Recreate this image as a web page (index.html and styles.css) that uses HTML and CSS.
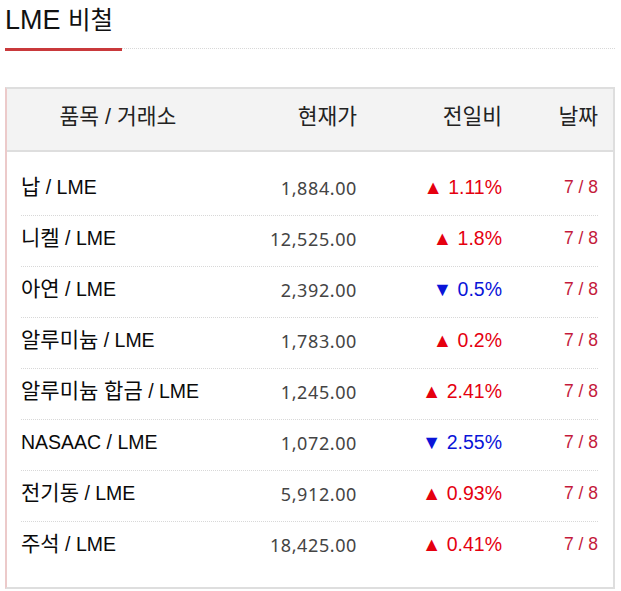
FILE: index.html
```html
<!DOCTYPE html>
<html lang="ko">
<head>
<meta charset="utf-8">
<title>LME 비철</title>
<link rel="stylesheet" href="styles.css">
</head>
<body>
<div class="title-bar">
  <h2 class="title"><span class="t-en">LME</span> <span class="t-ko">비철</span></h2>
  <div class="rule"></div>
</div>
<div class="box">
  <div class="head">
    <div class="h-name">품목 / 거래소</div>
    <div class="h-num">현재가</div>
    <div class="h-num">전일비</div>
    <div class="h-num">날짜</div>
  </div>
  <div class="body">
    <div class="row"><div class="name"><span class="ko">납</span> / LME</div><div class="price">1,884.00</div><div class="chg up">▲ 1.11%</div><div class="date">7 / 8</div></div>
    <div class="row"><div class="name"><span class="ko">니켈</span> / LME</div><div class="price">12,525.00</div><div class="chg up">▲ 1.8%</div><div class="date">7 / 8</div></div>
    <div class="row"><div class="name"><span class="ko">아연</span> / LME</div><div class="price">2,392.00</div><div class="chg down">▼ 0.5%</div><div class="date">7 / 8</div></div>
    <div class="row"><div class="name"><span class="ko">알루미늄</span> / LME</div><div class="price">1,783.00</div><div class="chg up">▲ 0.2%</div><div class="date">7 / 8</div></div>
    <div class="row"><div class="name"><span class="ko">알루미늄 합금</span> / LME</div><div class="price">1,245.00</div><div class="chg up">▲ 2.41%</div><div class="date">7 / 8</div></div>
    <div class="row"><div class="name">NASAAC / LME</div><div class="price">1,072.00</div><div class="chg down">▼ 2.55%</div><div class="date">7 / 8</div></div>
    <div class="row"><div class="name"><span class="ko">전기동</span> / LME</div><div class="price">5,912.00</div><div class="chg up">▲ 0.93%</div><div class="date">7 / 8</div></div>
    <div class="row"><div class="name"><span class="ko">주석</span> / LME</div><div class="price">18,425.00</div><div class="chg up">▲ 0.41%</div><div class="date">7 / 8</div></div>
  </div>
</div>
</body>
</html>
```

FILE: styles.css
```css
* { box-sizing: border-box; }
html, body { margin: 0; padding: 0; background: #fff; }
body {
  width: 621px;
  padding: 0 6px 0 5px;
  font-family: "Liberation Sans", "Noto Sans CJK KR", sans-serif;
  color: #111;
}
.title-bar {
  display: flex;
  align-items: flex-end;
  height: 51px;
}
.title {
  margin: 0;
  width: 117px;
  height: 51px;
  padding-top: 2px;
  font-size: 27px;
  line-height: 36px;
  font-weight: normal;
  color: #111;
  border-bottom: 3px solid #c9393b;
  white-space: nowrap;
}
.t-ko { font-size: 24.5px; }
.rule {
  flex: 1;
  margin-bottom: 2px;
  border-bottom: 1px dotted #d8d8d8;
}
.box {
  margin-top: 36px;
  width: 610px;
  border-top: 2px solid #dedede;
  border-right: 2px solid #dedede;
  border-bottom: 2px solid #dedede;
  border-left: 2px solid #eccaca;
  padding-bottom: 15px;
}
.head {
  display: grid;
  grid-template-columns: 194px 142px 145px 96px;
  height: 63px;
  padding: 13px 15px 0 14px;
  background: #f3f3f3;
  border-bottom: 2px solid #dedede;
  font-size: 21.5px;
  line-height: 30px;
  color: #222;
}
.h-name { text-align: center; }
.h-num { text-align: right; }
.body { padding: 13px 15px 0 14px; }
.row {
  display: grid;
  grid-template-columns: 194px 142px 145px 96px;
  height: 51px;
  padding-top: 11px;
  border-bottom: 1px dotted #d8d8d8;
  font-size: 19.5px;
  line-height: 22px;
}
.row:last-child { border-bottom: none; height: 50px; }
.name { color: #0a0a0a; white-space: nowrap; }
.ko { font-size: 21px; }
.price {
  text-align: right;
  color: #444;
  font-family: "Noto Sans", sans-serif;
  font-size: 18px;
  letter-spacing: 0.6px;
  padding-top: 1px;
}
.chg { text-align: right; }
.up { color: #e5000f; }
.down { color: #0a14d8; }
.date { text-align: right; color: #c4193b; font-size: 17.5px; }
```
